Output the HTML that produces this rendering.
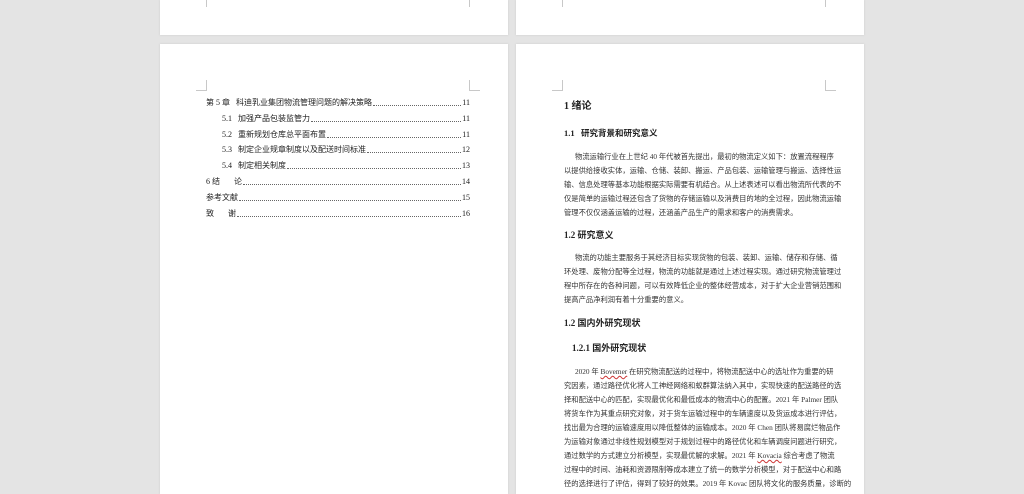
<!DOCTYPE html>
<html><head><meta charset="utf-8"><style>
body{margin:0;width:1024px;height:483px;background:#e4e4e4;position:relative;overflow:hidden;font-family:"Liberation Serif","Noto Sans CJK SC",serif;color:#222}
.pg{position:absolute;background:#fff;box-shadow:0 0 2px #ccc}
.m{position:absolute;border-color:#c8c8c8;border-style:solid;border-width:0}
.toc{position:absolute;left:206px;width:264px;font-size:8px;line-height:10px;display:flex;white-space:nowrap;color:#222}
.toc .d{flex:1;border-bottom:1px dotted #666;margin:0 1px 2px}
.p{position:absolute;left:564px;width:264px;font-size:7.3px;line-height:10px;white-space:nowrap;text-align:justify;text-align-last:justify;color:#333}
.h{position:absolute;font-size:9px;line-height:12px;white-space:nowrap;color:#222;font-weight:bold}
u{text-decoration:underline wavy #c33;text-decoration-thickness:0.5px}
</style></head><body>
<div class="pg" style="left:160px;top:0;width:348px;height:35px"></div>
<div class="pg" style="left:516px;top:0;width:348px;height:35px"></div>
<div class="pg" style="left:160px;top:44px;width:348px;height:450px"></div>
<div class="pg" style="left:516px;top:44px;width:348px;height:450px"></div>
<div class="m" style="left:206px;top:0;height:7px;border-left-width:1px"></div>
<div class="m" style="left:469px;top:0;height:7px;border-left-width:1px"></div>
<div class="m" style="left:562px;top:0;height:7px;border-left-width:1px"></div>
<div class="m" style="left:825px;top:0;height:7px;border-left-width:1px"></div>
<div class="m" style="left:196px;top:80px;width:10px;height:10px;border-right-width:1px;border-bottom-width:1px"></div>
<div class="m" style="left:469px;top:80px;width:10px;height:10px;border-left-width:1px;border-bottom-width:1px"></div>
<div class="m" style="left:552px;top:80px;width:10px;height:10px;border-right-width:1px;border-bottom-width:1px"></div>
<div class="m" style="left:825px;top:80px;width:10px;height:10px;border-left-width:1px;border-bottom-width:1px"></div>

<div class="toc" style="top:98px">第 5 章&nbsp;&nbsp;&nbsp;科迪乳业集团物流管理问题的解决策略<span class="d"></span>11</div>
<div class="toc" style="top:114px;left:222px;width:248px">5.1&nbsp;&nbsp;&nbsp;加强产品包装监管力<span class="d"></span>11</div>
<div class="toc" style="top:130px;left:222px;width:248px">5.2&nbsp;&nbsp;&nbsp;重新规划仓库总平面布置<span class="d"></span>11</div>
<div class="toc" style="top:145px;left:222px;width:248px">5.3&nbsp;&nbsp;&nbsp;制定企业规章制度以及配送时间标准<span class="d"></span>12</div>
<div class="toc" style="top:161px;left:222px;width:248px">5.4&nbsp;&nbsp;&nbsp;制定相关制度<span class="d"></span>13</div>
<div class="toc" style="top:177px">6 结&nbsp;&nbsp;&nbsp;&nbsp;&nbsp;&nbsp;&nbsp;论<span class="d"></span>14</div>
<div class="toc" style="top:193px">参考文献<span class="d"></span>15</div>
<div class="toc" style="top:209px">致&nbsp;&nbsp;&nbsp;&nbsp;&nbsp;&nbsp;&nbsp;谢<span class="d"></span>16</div>

<div class="h" style="left:564px;top:101px;font-size:10px">1 绪论</div>
<div class="h" style="left:564px;top:127px;font-size:8.5px">1.1&nbsp;&nbsp;&nbsp;研究背景和研究意义</div>
<div class="p" style="top:152px">&nbsp;&nbsp;&nbsp;&nbsp;&nbsp;&nbsp;物流运输行业在上世纪 40 年代被首先提出，最初的物流定义如下：放置流程程序</div>
<div class="p" style="top:166px">以提供给接收实体，运输、仓储、装卸、搬运、产品包装、运输管理与搬运、选择性运</div>
<div class="p" style="top:180px">输、信息处理等基本功能根据实际需要有机结合。从上述表述可以看出物流所代表的不</div>
<div class="p" style="top:194px">仅是简单的运输过程还包含了货物的存储运输以及消费目的地的全过程，因此物流运输</div>
<div class="p" style="top:208px;text-align-last:left">管理不仅仅涵盖运输的过程，还涵盖产品生产的需求和客户的消费需求。</div>
<div class="h" style="left:564px;top:229px;font-size:9px">1.2 研究意义</div>
<div class="p" style="top:253px">&nbsp;&nbsp;&nbsp;&nbsp;&nbsp;&nbsp;物流的功能主要服务于其经济目标实现货物的包装、装卸、运输、储存和存储、循</div>
<div class="p" style="top:267px">环处理、废物分配等全过程，物流的功能就是通过上述过程实现。通过研究物流管理过</div>
<div class="p" style="top:281px">程中所存在的各种问题，可以有效降低企业的整体经营成本，对于扩大企业营销范围和</div>
<div class="p" style="top:295px;text-align-last:left">提高产品净利润有着十分重要的意义。</div>
<div class="h" style="left:564px;top:317px;font-size:9px">1.2 国内外研究现状</div>
<div class="h" style="left:572px;top:342px;font-size:9px">1.2.1 国外研究现状</div>
<div class="p" style="top:367px">&nbsp;&nbsp;&nbsp;&nbsp;&nbsp;&nbsp;2020 年 <u>Bovemer</u> 在研究物流配送的过程中，将物流配送中心的选址作为重要的研</div>
<div class="p" style="top:381px">究因素，通过路径优化将人工神经网络和蚁群算法纳入其中，实现快速的配送路径的选</div>
<div class="p" style="top:395px">择和配送中心的匹配，实现最优化和最低成本的物流中心的配置。2021 年 Palmer 团队</div>
<div class="p" style="top:409px">将货车作为其重点研究对象，对于货车运输过程中的车辆速度以及货运成本进行评估，</div>
<div class="p" style="top:423px">找出最为合理的运输速度用以降低整体的运输成本。2020 年 Chen 团队将易腐烂物品作</div>
<div class="p" style="top:437px">为运输对象通过非线性规划模型对于规划过程中的路径优化和车辆调度问题进行研究，</div>
<div class="p" style="top:451px">通过数学的方式建立分析模型，实现最优解的求解。2021 年 <u>Kovacia</u> 综合考虑了物流</div>
<div class="p" style="top:465px">过程中的时间、油耗和资源限制等成本建立了统一的数学分析模型，对于配送中心和路</div>
<div class="p" style="top:479px">径的选择进行了评估，得到了较好的效果。2019 年 Kovac 团队将文化的服务质量，诊断的</div>
</body></html>
